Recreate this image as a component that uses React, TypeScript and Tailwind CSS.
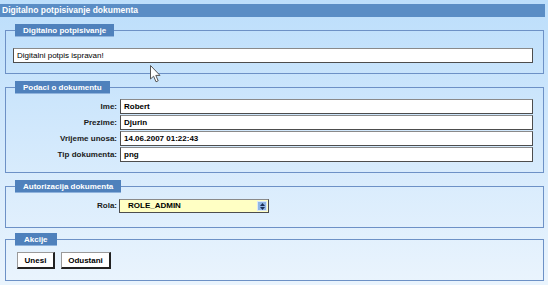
const rows = [
  { label: "Ime:", value: "Robert" },
  { label: "Prezime:", value: "Djurin" },
  { label: "Vrijeme unosa:", value: "14.06.2007 01:22:43" },
  { label: "Tip dokumenta:", value: "png" },
];

function Legend({ children }: { children: React.ReactNode }) {
  return (
    <legend className="ml-[2px] h-[13px] px-[8px] bg-[#4f81bc] border-b border-[#8fb3dd] text-white font-bold text-[8px] leading-[13px]">
      {children}
    </legend>
  );
}

function Field({ children }: { children: React.ReactNode }) {
  return (
    <div className="h-[15px] bg-white border border-[#4d4d4d] border-t-[#8a8a8a] pl-[3px] text-[8px] font-bold leading-[13px] text-black">
      {children}
    </div>
  );
}

export default function App() {
  return (
    <div className="relative w-[548px] h-[285px] overflow-hidden bg-gradient-to-b from-[#bcdefb] to-[#eaf4fd] pt-[4px] font-['Liberation_Sans',Arial,sans-serif]">
      <div className="mr-[3px] h-[13px] bg-[#5a8dc5] pl-[2px] text-white font-bold text-[8.5px] leading-[13px]">
        Digitalno potpisivanje dokumenta
      </div>

      <fieldset className="mt-[7px] mx-[5px] mr-[4px] border border-[#6d91c6] pl-[7px] pr-[10px] pt-[11px] pb-[10px]">
        <Legend>Digitalno potpisivanje</Legend>
        <div className="h-[15px] bg-white border border-[#4d4d4d] border-t-[#8a8a8a] pl-[3px] text-[8px] leading-[13px] text-black">
          Digitalni potpis ispravan!
        </div>
      </fieldset>

      <fieldset className="mt-[7px] ml-[5px] mr-[4px] border border-[#6d91c6] pl-[7px] pr-[10px] pt-[5px] pb-[10px]">
        <Legend>Podaci o dokumentu</Legend>
        <div className="grid grid-cols-[104px_1fr] gap-x-[3px] gap-y-[1px]">
          {rows.map((r) => (
            <div key={r.label} className="contents">
              <div className="text-right text-[8px] font-bold leading-[15px] text-[#1a1a1a]">{r.label}</div>
              <Field>{r.value}</Field>
            </div>
          ))}
        </div>
      </fieldset>

      <fieldset className="mt-[7px] ml-[5px] mr-[4px] border border-[#6d91c6] pl-[7px] pr-[10px] pt-[6px] pb-[14px]">
        <Legend>Autorizacija dokumenta</Legend>
        <div className="grid grid-cols-[104px_150px] gap-x-[2px]">
          <div className="text-right text-[8px] font-bold leading-[14px] text-[#1a1a1a]">Rola:</div>
          <div className="flex h-[14px] items-center bg-[#ffffc4] border border-[#4d4d4d] border-t-[#8a8a8a] pl-[8px] pr-[1px]">
            <span className="flex-1 text-[8px] font-bold leading-[12px] text-black">ROLE_ADMIN</span>
            <div className="flex h-[10px] w-[10px] flex-col items-center justify-center gap-[1px] bg-[#8fb6e6] border border-[#dbe8f7]">
              <svg width="5" height="3" viewBox="0 0 5 3">
                <path d="M0 3 L2.5 0 L5 3 Z" fill="#1d2f55" />
              </svg>
              <svg width="5" height="3" viewBox="0 0 5 3">
                <path d="M0 0 L2.5 3 L5 0 Z" fill="#1d2f55" />
              </svg>
            </div>
          </div>
        </div>
      </fieldset>

      <fieldset className="mt-[5px] ml-[5px] mr-[4px] border border-[#6d91c6] pl-[11px] pr-[10px] pt-[6px] pb-[11px]">
        <legend className="-ml-[2px] h-[13px] px-[9px] bg-[#4f81bc] border-b border-[#8fb3dd] text-white font-bold text-[8px] leading-[13px]">
          Akcije
        </legend>
        <div className="flex gap-[6px]">
          <button className="h-[17px] w-[38px] bg-white border border-[#9a9a9a] border-b-2 border-r-2 border-b-[#222] border-r-[#222] text-[8px] font-bold leading-[13px] text-black">
            Unesi
          </button>
          <button className="h-[17px] w-[50px] bg-white border border-[#9a9a9a] border-b-2 border-r-2 border-b-[#222] border-r-[#222] text-[8px] font-bold leading-[13px] text-black">
            Odustani
          </button>
        </div>
      </fieldset>

      <svg className="absolute left-[150px] top-[65px]" width="12" height="18" viewBox="0 0 12 18">
        <path d="M0.5 0.5 L0.5 14 L3.6 11.2 L6 16.8 L8.2 15.8 L5.8 10.4 L10 10.4 Z" fill="#ffffff" stroke="#555" strokeWidth="1" strokeLinejoin="round" />
      </svg>
    </div>
  );
}
